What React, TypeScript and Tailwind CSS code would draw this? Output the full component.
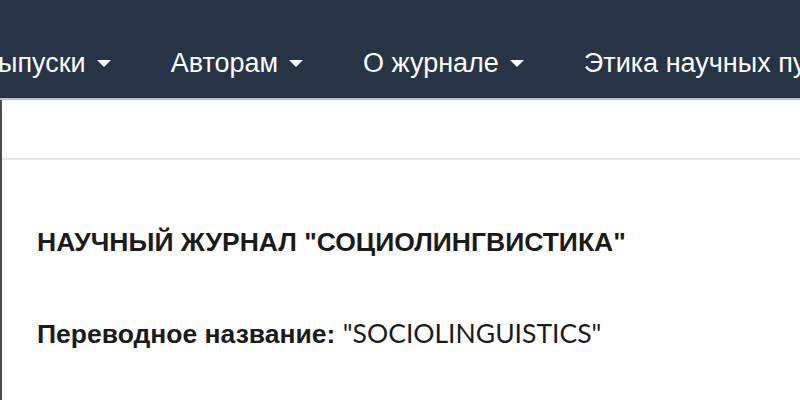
import React from "react";

const navItems = [
  { label: "Выпуски", dropdown: true },
  { label: "Авторам", dropdown: true },
  { label: "О журнале", dropdown: true },
  { label: "Этика научных публикаций", dropdown: false },
];

const Caret = () => (
  <svg width="14" height="8" viewBox="0 0 14 8" className="ml-[11px] mt-[2px]">
    <path d="M0 0h14L7 7z" fill="currentColor" />
  </svg>
);

const App = () => {
  return (
    <div className="w-[800px] h-[400px] overflow-hidden bg-white font-['Liberation_Sans',Arial,sans-serif]">
      <nav className="h-[100px] bg-[#263446] border-b-2 border-[#b9c2cc] flex items-center pt-[28px] -ml-[50px] w-[900px] whitespace-nowrap">
        {navItems.map((item) => (
          <a
            key={item.label}
            className="flex items-center px-[30px] text-white text-[27px] leading-none"
          >
            {item.label}
            {item.dropdown && <Caret />}
          </a>
        ))}
      </nav>
      <div className="border-l-2 border-[#4a4a4a] h-[300px]">
        <div className="h-[60px] border-b-2 border-[#e6e6e6]" />
        <div className="pl-[35px] pt-[69px] text-[#1b1b1b] text-[26.5px] leading-none">
          <h1 className="font-bold">
            НАУЧНЫЙ ЖУРНАЛ "СОЦИОЛИНГВИСТИКА"
          </h1>
          <p className="mt-[64px]">
            <span className="font-bold">Переводное название:</span>{" "}
            <span className="font-['Lato',sans-serif]">"SOCIOLINGUISTICS"</span>
          </p>
        </div>
      </div>
    </div>
  );
};

export default App;
